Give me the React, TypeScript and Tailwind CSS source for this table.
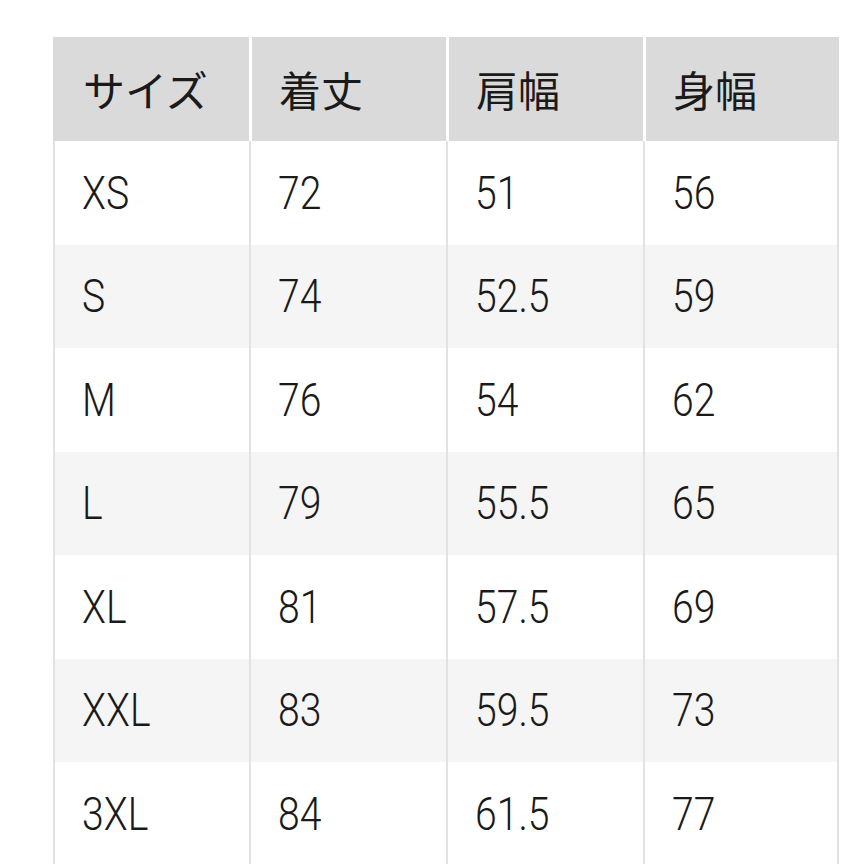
import React from "react";

const rows: string[][] = [
  ["XS", "72", "51", "56"],
  ["S", "74", "52.5", "59"],
  ["M", "76", "54", "62"],
  ["L", "79", "55.5", "65"],
  ["XL", "81", "57.5", "69"],
  ["XXL", "83", "59.5", "73"],
  ["3XL", "84", "61.5", "77"],
];

const headers = ["サイズ", "着丈", "肩幅", "身幅"];

export default function App() {
  return (
    <div className="w-[864px] h-[864px] overflow-hidden bg-white pt-[37px] pl-[53px]">
      <div className="w-[786px]">
        <div className="grid grid-cols-[196px_197px_197px_196px] h-[104px] bg-[#dadada]">
          {headers.map((h, i) => (
            <div
              key={h}
              className={`flex items-center pl-[27px] border-l-[3px] ${i === 0 ? "border-[#dadada]" : "border-white"}`}
            >
              <span className="text-[42px] leading-none text-[#1a1a1a] font-['Noto_Sans_CJK_JP',sans-serif]">
                {h}
              </span>
            </div>
          ))}
        </div>
        {rows.map((r, ri) => (
          <div
            key={r[0]}
            className={`grid grid-cols-[196px_197px_197px_196px] h-[103.5px] ${ri % 2 === 1 ? "bg-[#f5f5f5]" : "bg-white"}`}
          >
            {r.map((c, ci) => (
              <div
                key={ci}
                className={`flex items-center pl-[27px] border-l-2 border-[#e2e2e2] ${ci === 3 ? "border-r-2" : ""}`}
              >
                <span className="inline-block origin-left scale-x-[0.85] text-[46px] font-light leading-none text-[#1a1a1a] font-['Roboto',sans-serif]">
                  {c}
                </span>
              </div>
            ))}
          </div>
        ))}
      </div>
    </div>
  );
}
